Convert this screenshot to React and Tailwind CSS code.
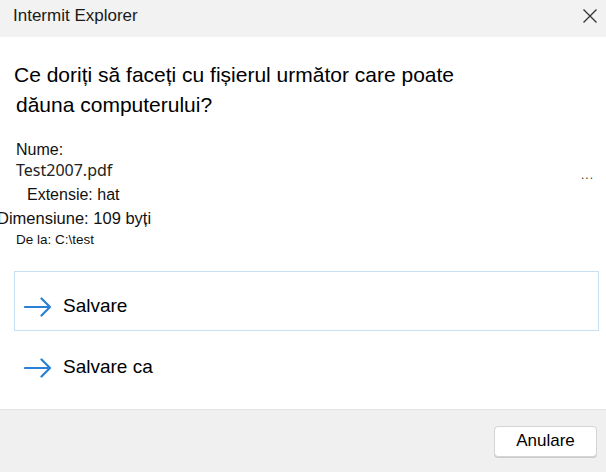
import { useState } from 'react'

function Arrow() {
  return (
    <svg width="28" height="20" viewBox="0 0 28 20" fill="none" className="shrink-0">
      <path d="M1 10 H26 M17.5 1.5 L26 10 L17.5 18.5" stroke="#2a7fd6" strokeWidth="2.2" strokeLinecap="round" strokeLinejoin="round" />
    </svg>
  )
}

function Option({ label, active, onClick }) {
  return (
    <button
      onClick={onClick}
      className={`flex items-center h-[60px] w-full pl-[9px] pt-[11px] text-left border ${active ? 'border-[#c7e0f4]' : 'border-transparent'}`}
    >
      <Arrow />
      <span className="ml-[11px] text-[19px] text-black">{label}</span>
    </button>
  )
}

export default function App() {
  const [selected, setSelected] = useState('save')

  return (
    <div className="w-[606px] h-[472px] flex flex-col bg-white overflow-hidden" style={{ fontFamily: '"Liberation Sans", Arial, sans-serif' }}>
      {/* title bar */}
      <div className="h-[37px] bg-[#f2f2f2] flex items-center justify-between pl-[13px] pr-[8px] shrink-0">
        <span className="text-[17px] text-[#1a1a1a] -mt-[5px]">Intermit Explorer</span>
        <svg width="16" height="16" viewBox="0 0 16 16" className="-mt-[6px]">
          <path d="M1.5 1.5 L14.5 14.5 M14.5 1.5 L1.5 14.5" stroke="#333" strokeWidth="1.3" />
        </svg>
      </div>

      {/* content */}
      <div className="flex-1 flex flex-col">
        <div className="pt-[23px] pl-[14px] text-[21px] leading-[30px] text-black">
          <div>Ce doriți să faceți cu fișierul următor care poate</div>
          <div className="pl-[2px]">dăuna computerului?</div>
        </div>

        <div className="mt-[20px] flex flex-col text-[#111]">
          <div className="pl-[16px] text-[16px] leading-[20px] h-[20px]">Nume:</div>
          <div className="relative h-[20px] pl-[16px] leading-[20px]">
            <span className="text-[16px] text-[#222]" style={{ fontFamily: '"Noto Sans", sans-serif' }}>Test2007.pdf</span>
            <span className="absolute right-[12px] top-[5px] text-[12px] tracking-[1px] text-[#333]">...</span>
          </div>
          <div className="pl-[27px] text-[16px] leading-[20px] h-[20px] mt-[5px]">Extensie: hat</div>
          <div className="-ml-[3px] text-[16.5px] leading-[20px] h-[20px] mt-[3px] whitespace-nowrap">Dimensiune: 109 byți</div>
          <div className="pl-[16px] text-[13.5px] leading-[16px] h-[16px] mt-[4px]">De la: C:\test</div>
        </div>

        <div className="mt-[23px] pl-[14px] pr-[7px] flex flex-col gap-[1px]">
          <Option label="Salvare" active={selected === 'save'} onClick={() => setSelected('save')} />
          <Option label="Salvare ca" active={selected === 'saveas'} onClick={() => setSelected('saveas')} />
        </div>
      </div>

      {/* footer */}
      <div className="h-[63px] shrink-0 bg-[#f0f0f0] border-t border-[#e3e3e3] flex items-center justify-end pr-[9px]">
        <button className="w-[103px] h-[31px] bg-white border border-[#d4d4d4] rounded-[4px] text-[17px] text-black shadow-[0_1px_0_#ccc]">
          Anulare
        </button>
      </div>
    </div>
  )
}
